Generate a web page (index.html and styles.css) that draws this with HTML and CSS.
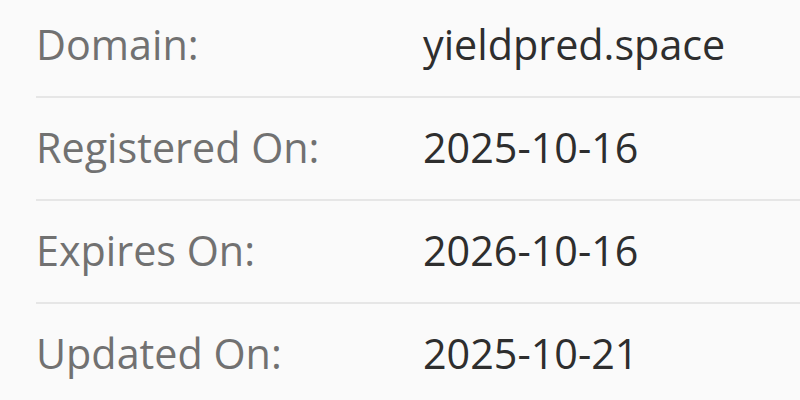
FILE: index.html
```html
<!DOCTYPE html>
<html lang="en">
<head>
<meta charset="utf-8">
<title>Domain info</title>
<link rel="stylesheet" href="styles.css">
</head>
<body>
<div class="info">
  <div class="row"><div class="label">Domain:</div><div class="value">yieldpred.space</div></div>
  <div class="row"><div class="label">Registered On:</div><div class="value">2025-10-16</div></div>
  <div class="row"><div class="label">Expires On:</div><div class="value">2026-10-16</div></div>
  <div class="row"><div class="label">Updated On:</div><div class="value">2025-10-21</div></div>
</div>
</body>
</html>
```
FILE: styles.css
```css
html, body {
  margin: 0;
  padding: 0;
  background: #fafafa;
  overflow: hidden;
}
body {
  font-family: "Open Sans", "Liberation Sans", sans-serif;
  font-size: 41.3px;
  line-height: 63px;
}
.info {
  margin-top: -5px;
  margin-left: 36px;
}
.row {
  display: grid;
  grid-template-columns: 387px 1fr;
  padding: 18px 0 20px 0;
  border-bottom: 2px solid #e6e6e6;
}
.label {
  color: #717171;
}
.value {
  color: #2e2e2e;
}
```
